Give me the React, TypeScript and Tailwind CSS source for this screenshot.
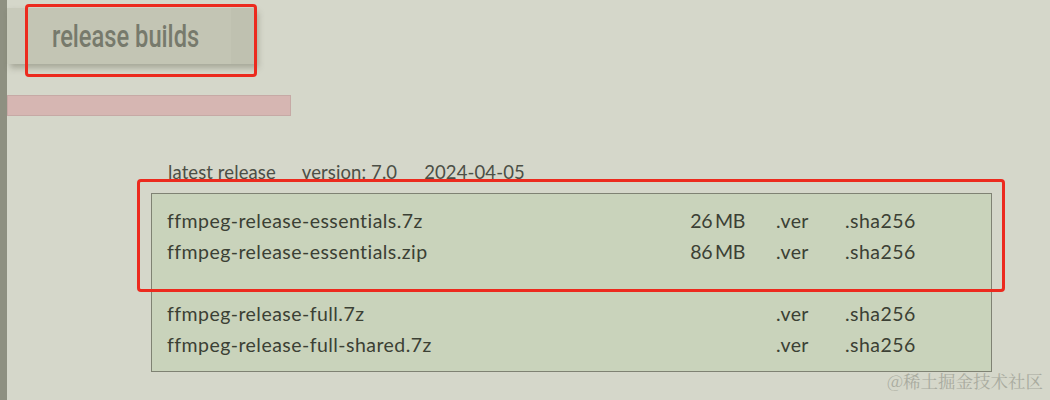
import React from "react";

const groups = [
  [
    { name: "ffmpeg-release-essentials.7z", size: "26 MB" },
    { name: "ffmpeg-release-essentials.zip", size: "86 MB" },
  ],
  [
    { name: "ffmpeg-release-full.7z", size: "" },
    { name: "ffmpeg-release-full-shared.7z", size: "" },
  ],
];

export default function App() {
  return (
    <div className="relative flex min-h-[400px] w-[1050px] overflow-hidden bg-[#d5d7ca]">
      {/* left rail */}
      <div className="w-[7px] shrink-0 bg-[#8e9081]" />

      <div className="flex-1">
        {/* tab */}
        <div className="mt-[8px] flex h-[56px] w-[248px] bg-[#c3c5b4] shadow-[3px_4px_6px_rgba(80,80,60,0.35)]">
          <div className="w-[20px] bg-[#c8cabb]" />
          <div className="flex flex-1 items-center overflow-hidden whitespace-nowrap pl-[25px]">
            <span className="inline-block origin-left scale-x-[0.74] font-['Roboto',sans-serif] text-[32px] font-medium text-[#777a6c]">
              release builds
            </span>
          </div>
          <div className="w-[24px] bg-[#bfc1b0]" />
        </div>

        {/* pink bar */}
        <div className="mt-[31px] h-[21px] w-[284px] border border-[#c6a9a5] bg-[#d6b6b2]" />

        {/* release section */}
        <div className="ml-[144px] mt-[45px] font-['Lato',sans-serif]">
          <div className="flex h-[24px] items-center pl-[17px] text-[18.5px] tracking-[0.1px] text-[#4c4f46]">
            <span>latest release</span>
            <span className="ml-[26px]">version: 7.0</span>
            <span className="ml-[27px]">2024-04-05</span>
          </div>

          <div className="mt-[8px] w-[841px] border border-[#7f8273] bg-[#c9d3bb] pb-[11px] pl-[15px] pt-[11px] text-[19.5px] tracking-[0.45px] text-[#3b4034]">
            {groups.map((g, gi) => (
              <div key={gi} className={gi > 0 ? "mt-[31px]" : ""}>
                {g.map((r) => (
                  <div key={r.name} className="flex h-[31px] items-center">
                    <span className="w-[500px]">{r.name}</span>
                    <span className="w-[78px] text-right tracking-[-0.3px] [word-spacing:-2px]">{r.size}</span>
                    <span className="ml-[31px] w-[69px]">.ver</span>
                    <span>.sha256</span>
                  </div>
                ))}
              </div>
            ))}
          </div>
        </div>
      </div>

      {/* annotation boxes */}
      <div className="absolute left-[25px] top-[4px] h-[73px] w-[232px] rounded-[4px] border-[3px] border-[#ec2a1e]" />
      <div className="absolute left-[137px] top-[179px] h-[113px] w-[868px] rounded-[4px] border-[3px] border-[#ec2a1e]" />

      {/* watermark */}
      <div className="absolute bottom-[6px] right-[7px] font-['Noto_Serif_CJK_SC','Noto_Sans_CJK_SC',serif] text-[17.5px] text-[#a9ab9f]">
        @稀土掘金技术社区
      </div>
    </div>
  );
}
